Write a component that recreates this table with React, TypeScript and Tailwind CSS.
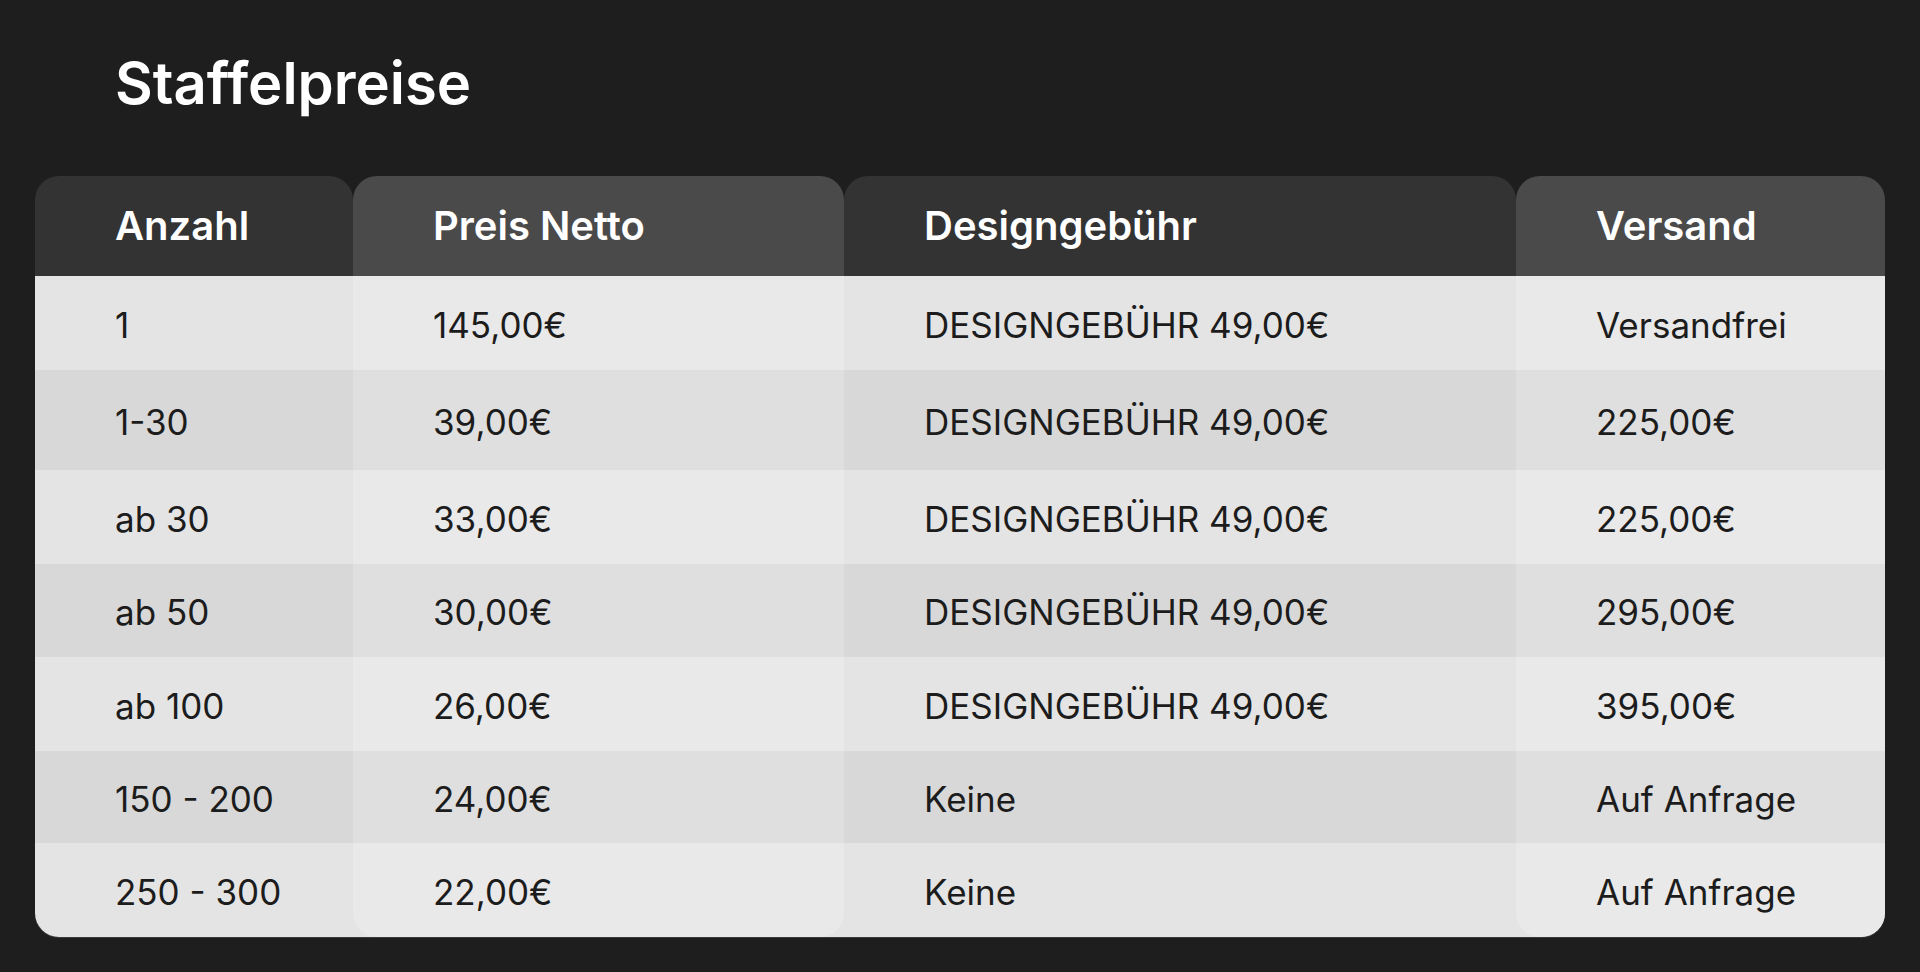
import React from "react";

type Row = { cells: [string, string, string, string]; h: number };

const rows: Row[] = [
  { cells: ["1", "145,00€", "DESIGNGEBÜHR 49,00€", "Versandfrei"], h: 94 },
  { cells: ["1-30", "39,00€", "DESIGNGEBÜHR 49,00€", "225,00€"], h: 100 },
  { cells: ["ab 30", "33,00€", "DESIGNGEBÜHR 49,00€", "225,00€"], h: 94 },
  { cells: ["ab 50", "30,00€", "DESIGNGEBÜHR 49,00€", "295,00€"], h: 93 },
  { cells: ["ab 100", "26,00€", "DESIGNGEBÜHR 49,00€", "395,00€"], h: 94 },
  { cells: ["150 - 200", "24,00€", "Keine", "Auf Anfrage"], h: 92 },
  { cells: ["250 - 300", "22,00€", "Keine", "Auf Anfrage"], h: 94 },
];

const headers = ["Anzahl", "Preis Netto", "Designgebühr", "Versand"];

function Cells({ col, light }: { col: number; light: boolean }) {
  return (
    <>
      {rows.map((r, i) => {
        const odd = i % 2 === 0;
        const bg = light
          ? odd
            ? "bg-[#e9e9e9]"
            : "bg-[#dfdfdf]"
          : odd
          ? "bg-[#e4e4e4]"
          : "bg-[#d8d8d8]";
        return (
          <div
            key={i}
            className={`flex items-center pl-[80px] pt-[4px] text-[35px] text-[#1c1c1c] ${bg}`}
            style={{ height: r.h }}
          >
            {r.cells[col]}
          </div>
        );
      })}
    </>
  );
}

function Header({ label, light }: { label: string; light: boolean }) {
  return (
    <div
      className={`flex h-[100px] items-center rounded-t-[24px] pl-[80px] text-[40px] font-semibold text-white ${
        light ? "bg-[#4a4a4a]" : "bg-[#333333]"
      }`}
    >
      {label}
    </div>
  );
}

export default function App() {
  return (
    <div
      className="h-[972px] w-full bg-[#1e1e1e] px-[35px] pt-[48px]"
      style={{ fontFamily: "Inter, 'Noto Sans', sans-serif" }}
    >
      <h1 className="mb-[58px] pl-[80px] text-[58px] font-semibold leading-[70px] text-white">
        Staffelpreise
      </h1>
      <div className="grid grid-cols-[318px_491px_672px_369px]">
        {/* Anzahl */}
        <div className="flex flex-col">
          <Header label={headers[0]} light={false} />
          <div className="flex flex-col overflow-hidden rounded-bl-[24px] shadow-[0_1px_0_#3a3a3a]">
            <Cells col={0} light={false} />
          </div>
        </div>
        {/* Preis Netto */}
        <div className="flex flex-col">
          <Header label={headers[1]} light={true} />
          <div className="bg-[#e4e4e4] shadow-[0_1px_0_#3a3a3a]">
            <div className="flex flex-col overflow-hidden rounded-b-[24px]">
              <Cells col={1} light={true} />
            </div>
          </div>
        </div>
        {/* Designgebühr */}
        <div className="flex flex-col">
          <Header label={headers[2]} light={false} />
          <div className="flex flex-col shadow-[0_1px_0_#3a3a3a]">
            <Cells col={2} light={false} />
          </div>
        </div>
        {/* Versand */}
        <div className="flex flex-col">
          <Header label={headers[3]} light={true} />
          <div className="overflow-hidden rounded-br-[24px] bg-[#e4e4e4] shadow-[0_1px_0_#3a3a3a]">
            <div className="flex flex-col overflow-hidden rounded-b-[24px]">
              <Cells col={3} light={true} />
            </div>
          </div>
        </div>
      </div>
    </div>
  );
}
